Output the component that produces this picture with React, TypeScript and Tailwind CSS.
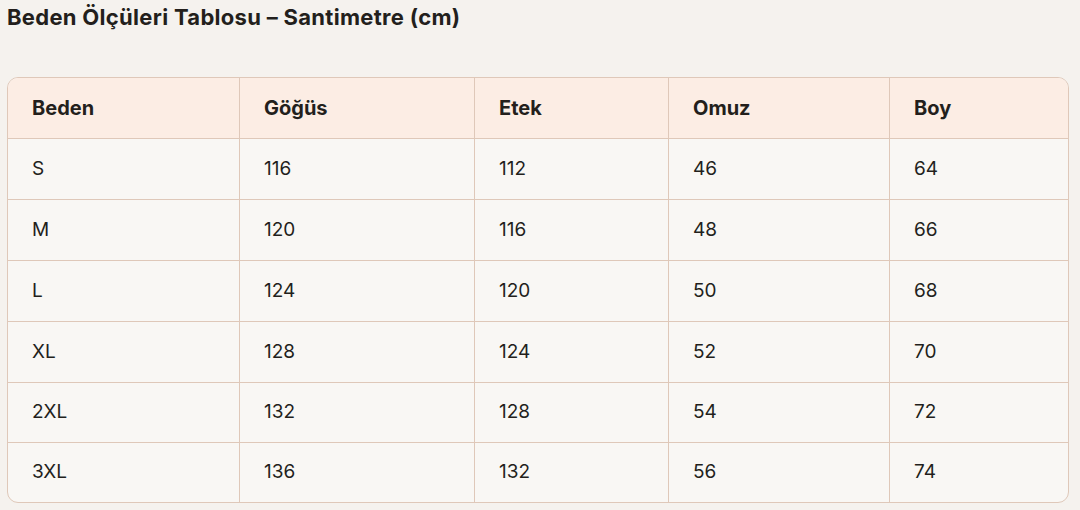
import React from "react";

const cols = ["w-[231px]", "w-[235px]", "w-[194px]", "w-[221px]", "flex-1"];
const header = ["Beden", "Göğüs", "Etek", "Omuz", "Boy"];
const rows = [
  ["S", "116", "112", "46", "64"],
  ["M", "120", "116", "48", "66"],
  ["L", "124", "120", "50", "68"],
  ["XL", "128", "124", "52", "70"],
  ["2XL", "132", "128", "54", "72"],
  ["3XL", "136", "132", "56", "74"],
];
const rowH = ["h-[61px]", "h-[61px]", "h-[61px]", "h-[61px]", "h-[60px]", "h-[60px]"];

export default function App() {
  return (
    <div
      className="w-[1080px] h-[510px] bg-[#f5f2ee] text-[#231f1c] overflow-hidden"
      style={{ fontFamily: "Inter, 'Noto Sans', sans-serif" }}
    >
      <h1 className="pl-[7px] pt-[3px] text-[22px] leading-[28px] font-bold tracking-[0.3px]">
        Beden Ölçüleri Tablosu – Santimetre (cm)
      </h1>
      <div className="ml-[7px] mt-[46px] w-[1062px] rounded-[11px] border border-[#dfc8b9] bg-[#f9f7f4] overflow-hidden">
        <div className="flex h-[60px] bg-[#fcede4]">
          {header.map((h, i) => (
            <div
              key={h}
              className={`${cols[i]} flex items-center pl-[24px] text-[20px] font-bold ${i > 0 ? "border-l border-[#dfc8b9]" : ""}`}
            >
              {h}
            </div>
          ))}
        </div>
        {rows.map((r, ri) => (
          <div key={ri} className={`flex border-t border-[#dfc8b9] ${rowH[ri]}`}>
            {r.map((c, i) => (
              <div
                key={i}
                className={`${cols[i]} flex items-center pl-[24px] text-[19px] ${i > 0 ? "border-l border-[#dfc8b9]" : ""}`}
              >
                {c}
              </div>
            ))}
          </div>
        ))}
      </div>
    </div>
  );
}
